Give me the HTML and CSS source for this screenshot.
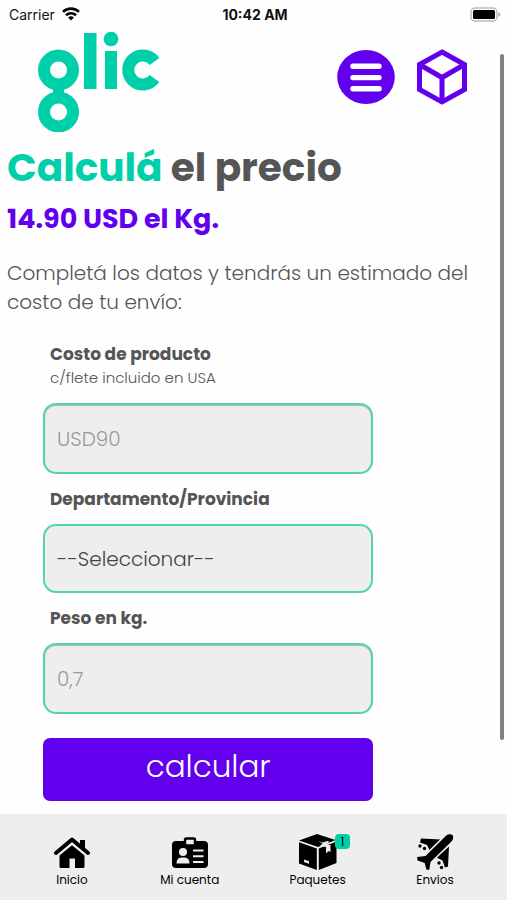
FILE: index.html
```html
<!DOCTYPE html>
<html lang="es">
<head>
    <meta charset="UTF-8">
    <meta name="viewport" content="width=device-width, initial-scale=1.0">
    <title>glic - Calculá el precio</title>
    <link rel="stylesheet" href="styles.css">
</head>
<body>

    <div class="status-bar">
        <div class="carrier">
            <span>Carrier</span>
            <svg width="18" height="14" viewBox="0 0 18 14" fill="none" stroke="#000" stroke-width="2.6">
                <path d="M1 4.9a11.5 11.5 0 0 1 16 0"/>
                <path d="M4 8.2a7.2 7.2 0 0 1 10 0"/>
                <path d="M9 13.6L6.1 10.6a4.2 4.2 0 0 1 5.8 0z" fill="#000" stroke="none"/>
            </svg>
        </div>
        <div class="clock">10:42 AM</div>
        <div class="battery">
            <svg width="31" height="15" viewBox="0 0 31 15">
                <rect x="1" y="1" width="26" height="13" rx="4" fill="#fff" stroke="#bbb" stroke-width="1.5"/>
                <rect x="3" y="3" width="22" height="9" rx="1.5" fill="#000"/>
                <path d="M28.5 5.2c1.4.5 2 1.3 2 2.3s-.6 1.8-2 2.3z" fill="#aaa"/>
            </svg>
        </div>
    </div>

    <header class="header">
        <a href="#" class="logo" aria-label="glic">
            <svg width="122" height="100" viewBox="0 0 122 100" fill="#00d0aa">
                <rect x="15" y="52" width="11" height="14"/>
                <circle cx="20.5" cy="38" r="14.5" fill="none" stroke="#00d0aa" stroke-width="12"/>
                <circle cx="20.5" cy="80" r="14.5" fill="none" stroke="#00d0aa" stroke-width="12"/>
                <rect x="46" y="1" width="12.5" height="56"/>
                <circle cx="73" cy="7" r="7.3"/>
                <rect x="67" y="19" width="12" height="38"/>
                <path d="M116.5 29.5a14.5 14.5 0 1 0 0 17" fill="none" stroke="#00d0aa" stroke-width="12"/>
            </svg>
        </a>
        <div class="header-actions">
            <button type="button" class="icon-btn" aria-label="Menú">
                <svg width="58" height="56" viewBox="0 0 58 56">
                    <ellipse cx="29" cy="28" rx="28.8" ry="27" fill="#6200ee"/>
                    <path d="M16 17.3h26M16 28.6h26M16 39.8h26" stroke="#fff" stroke-width="5.4" stroke-linecap="round"/>
                </svg>
            </button>
            <button type="button" class="icon-btn" aria-label="Paquete">
                <svg width="52" height="56" viewBox="0 0 52 56" fill="none" stroke="#6200ee" stroke-width="5">
                    <path d="M26 3L48.5 15.5V40.5L26 53L3.5 40.5V15.5z"/>
                    <path d="M3.5 15.5L26 28.5L48.5 15.5M26 28.5V53"/>
                </svg>
            </button>
        </div>
    </header>

    <main class="content">
        <h1><span>Calculá</span> el precio</h1>
        <h2>14.90 USD el Kg.</h2>
        <p class="intro">Completá los datos y tendrás un estimado del costo de tu envío:</p>

        <form class="form">
            <label for="costo">Costo de producto <small>c/flete incluido en USA</small></label>
            <input type="text" id="costo" name="costo" placeholder="USD90">

            <label for="provincia">Departamento/Provincia</label>
            <select id="provincia" name="provincia">
                <option>--Seleccionar--</option>
            </select>

            <label for="peso">Peso en kg.</label>
            <input type="text" id="peso" name="peso" placeholder="0,7">

            <button type="button" class="calcular">calcular</button>
        </form>
    </main>

    <nav class="tabs">
        <a href="#">
            <svg width="36" height="34" viewBox="0 0 36 34">
                <path d="M2 18L18 4.5L34 18" fill="none" stroke="#000" stroke-width="4" stroke-linecap="round" stroke-linejoin="round"/>
                <path d="M26 5h5v9l-5-4z"/>
                <path d="M18 10.2L30.5 20.5V31.5q0 1.5-1.5 1.5H21V23.5H15.5V33H7q-1.5 0-1.5-1.5V20.5z"/>
            </svg>
            Inicio
        </a>
        <a href="#">
            <svg width="38" height="34" viewBox="0 0 38 34">
                <rect x="1" y="6" width="36" height="27" rx="4"/>
                <rect x="14" y="3.5" width="10" height="7" rx="1.5" fill="#eee" stroke="#000" stroke-width="2.5"/>
                <circle cx="12" cy="17" r="4" fill="#eee"/>
                <path d="M5.5 28.5q0-6 5-6h3q5 0 5 6z" fill="#eee"/>
                <path d="M22 15.5h10.5M22 21.3h10.5M22 27.1h10.5" stroke="#eee" stroke-width="2"/>
            </svg>
            Mi cuenta
        </a>
        <a href="#">
            <svg width="38" height="37" viewBox="0 0 38 37">
                <path d="M18 .5L36.5 6.5L19 13.5L0 7z"/>
                <path d="M0 8.8L17.8 15V36.5L0 30z"/>
                <path d="M19.8 15L37.5 8V29.5L19.8 36.5z"/>
                <path d="M19.5 7.5l4 1.5 5-1.5 2 1-4 2.5 5 .5v7l-2-1-2.5 2.5v-6.500l-6-1 2.500-2.500z" fill="#eee"/>
                <path d="M5 26l5 1.7v2.5L5 28.5z" fill="#eee"/>
            </svg>
            <span class="badge">1</span>
            Paquetes
        </a>
        <a href="#">
            <svg width="38" height="37" viewBox="0 0 38 37">
                <path d="M5 5L25 6 14 17.5 11 11.5 4 9z"/>
                <path d="M33 13L32 33 29 34 26.500 27 20.500 24z"/>
                <path d="M30 2.200C33 .2 37.500 0 37.200 4c0 2-1.200 3.500-2.700 5L14.500 28.500l-1.300 8-2.800-.5-1.700-6.500L1.500 27l-.4-3.500 8.400-1.100z" stroke="#eee" stroke-width="3" paint-order="stroke"/>
                <circle cx="4" cy="12.500" r="1.700"/>
                <circle cx="8.500" cy="15" r="1.700"/>
                <circle cx="25.500" cy="34" r="1.700"/>
                <circle cx="23" cy="29.500" r="1.700"/>
            </svg>
            Envios
        </a>
    </nav>

    <div class="scroll-thumb"></div>

</body>
</html>
```
FILE: styles.css
```css
* {
    margin: 0;
    padding: 0;
    box-sizing: border-box;
}
body {
    display: flex;
    flex-direction: column;
    min-height: 100vh;
    font-family: 'Poppins', 'Inter', sans-serif;
    background-color: #fefefe;
    color: #555;
}
svg {
    display: block;
}
button {
    border: none;
    font-family: inherit;
    cursor: pointer;
}
.status-bar {
    display: grid;
    grid-template-columns: 1fr auto 1fr;
    align-items: center;
    height: 28px;
    padding: 0 6px 0 9px;
    font-family: 'Inter', sans-serif;
    font-size: 14px;
    color: #111;
}
.carrier {
    display: flex;
    align-items: center;
    gap: 7px;
}
.clock {
    font-weight: 700;
}
.battery {
    justify-self: end;
}
.header {
    display: flex;
    justify-content: space-between;
    align-items: flex-start;
    padding: 4px 39px 14px 38px;
}
.header-actions {
    display: flex;
    gap: 21px;
    padding-top: 17px;
}
.icon-btn {
    background: none;
}
.content {
    padding: 0 7px 12px;
}
h1 {
    font-size: 39px;
    line-height: 44px;
    font-weight: 700;
}
h1 span {
    color: #00d0aa;
}
h2 {
    margin-top: 13px;
    font-size: 27px;
    line-height: 32px;
    font-weight: 700;
    color: #6200ee;
}
.intro {
    max-width: 468px;
    margin-top: 24px;
    font-size: 20px;
    line-height: 29px;
    font-weight: 300;
    color: #555;
}
.form {
    width: 67%;
    margin: 25px 0 0 36px;
}
.form label {
    display: block;
    padding-left: 7px;
    font-size: 17px;
    line-height: 24px;
    font-weight: 700;
}
.form small {
    display: block;
    font-size: 15px;
    font-weight: 300;
}
.form input, .form select {
    display: block;
    width: 100%;
    height: 71px;
    margin: 13px 0;
    padding: 0 12px;
    border: 2px solid #4fd3b5;
    border-radius: 13px;
    background-color: #eee;
    font-family: inherit;
    font-size: 20px;
    font-weight: 300;
    color: #444;
}
.form input {
    box-shadow: inset 0 1px 1px rgba(0, 0, 0, 0.25);
}
.form select {
    height: 69px;
    appearance: none;
}
.form input::placeholder {
    color: #999;
}
.calcular {
    display: block;
    width: 100%;
    height: 63px;
    margin-top: 24px;
    padding-bottom: 6px;
    border-radius: 7px;
    background-color: #6200ee;
    font-size: 31px;
    font-weight: 300;
    color: #fff;
}
.tabs {
    display: flex;
    justify-content: space-between;
    height: 86px;
    margin-top: auto;
    padding: 19px 53px 0 54px;
    background-color: #eee;
}
.tabs a {
    position: relative;
    display: flex;
    flex-direction: column;
    align-items: center;
    font-size: 12px;
    line-height: 18px;
    color: #000;
    text-decoration: none;
}
.tabs svg {
    height: 38px;
}
.badge {
    position: absolute;
    top: 1px;
    right: -4px;
    width: 15px;
    height: 15px;
    border-radius: 4px;
    background-color: #00d0aa;
    line-height: 15px;
    text-align: center;
}
.scroll-thumb {
    position: absolute;
    top: 54px;
    right: 3px;
    width: 4px;
    height: 686px;
    border-radius: 2px;
    background-color: #808080;
}
```
